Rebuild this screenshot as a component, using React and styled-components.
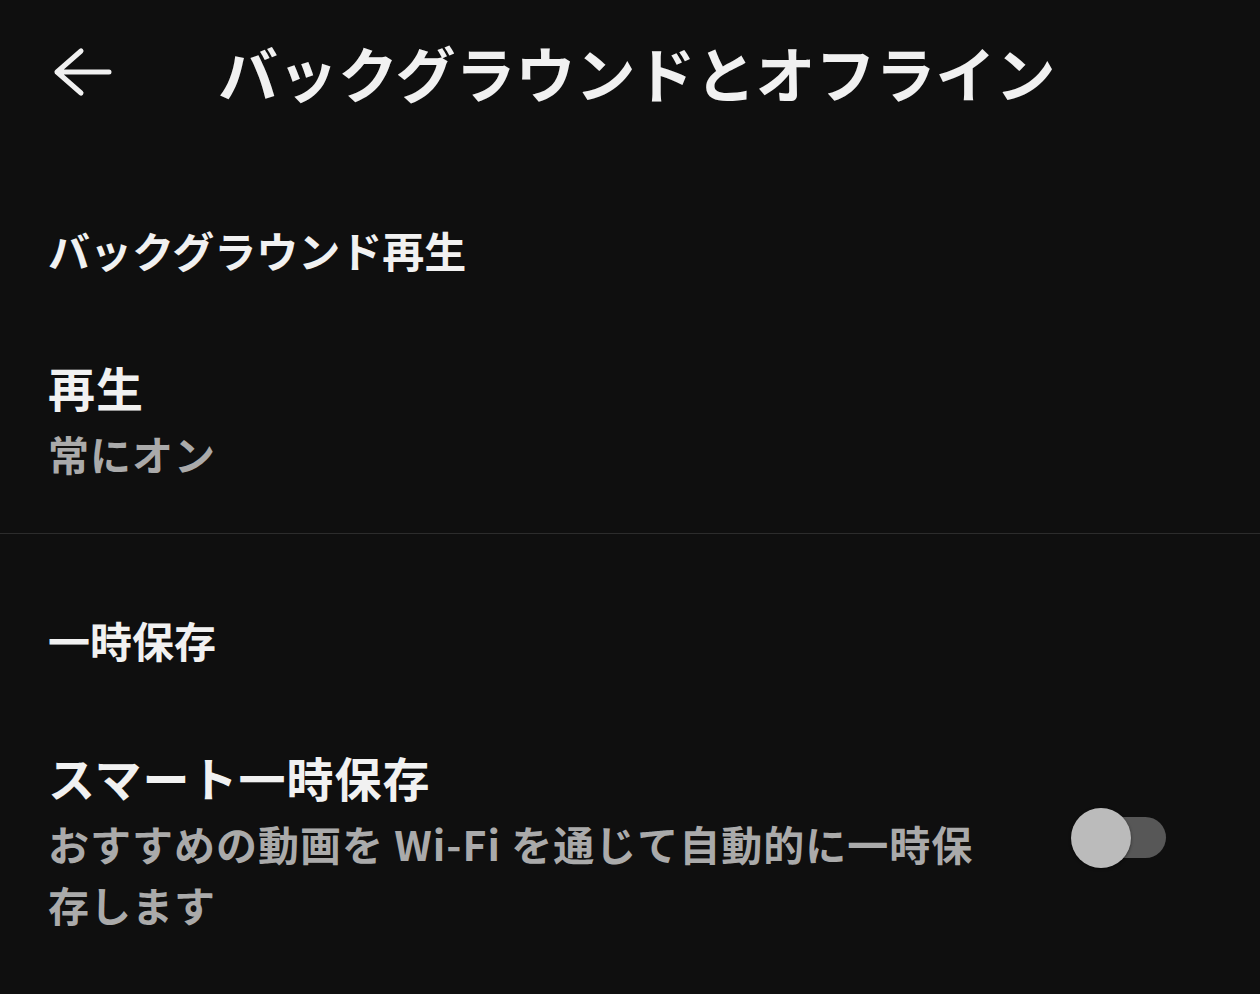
import styled, { createGlobalStyle } from "styled-components";

const GlobalStyle = createGlobalStyle`
  html, body {
    margin: 0;
    padding: 0;
    background: #0f0f0f;
  }
  body {
    font-family: "Noto Sans CJK JP", "Noto Sans", sans-serif;
    color: #f1f1f1;
  }
`;

const Page = styled.div`
  width: 1260px;
  min-height: 994px;
  background: #0f0f0f;
  overflow: hidden;
`;

const TopBar = styled.header`
  display: flex;
  align-items: center;
  height: 144px;
  padding-left: 48px;
  box-sizing: border-box;
`;

const BackButton = styled.button`
  display: flex;
  align-items: center;
  justify-content: center;
  width: 64px;
  height: 52px;
  padding: 0;
  border: none;
  background: none;
  color: #f1f1f1;
  cursor: pointer;
`;

const PageTitle = styled.h1`
  margin: 0 0 0 106px;
  font-size: 60px;
  font-weight: 700;
  line-height: 1;
  color: #f1f1f1;
`;

const SectionTitle = styled.h2`
  margin: 0;
  padding: 76px 48px 0;
  font-size: 42px;
  font-weight: 700;
  line-height: 60px;
  color: #f1f1f1;
`;

const Row = styled.div`
  display: flex;
  align-items: center;
  padding: 70px 94px ${({ $last }) => ($last ? "56px" : "49px")} 48px;
  border-bottom: ${({ $divider }) => ($divider ? "1px solid #2c2c2c" : "none")};
`;

const RowText = styled.div`
  flex: 1;
  min-width: 0;
`;

const RowTitle = styled.div`
  font-size: 47px;
  font-weight: 700;
  line-height: 73px;
  letter-spacing: 1px;
  color: #f1f1f1;
`;

const RowSub = styled.div`
  font-size: 41px;
  font-weight: 700;
  line-height: 61px;
  letter-spacing: 1px;
  color: #aaaaaa;
`;

const Switch = styled.div`
  position: relative;
  flex: none;
  width: 95px;
  height: 60px;
  margin-left: 85px;
  cursor: pointer;
`;

const Track = styled.span`
  position: absolute;
  right: 0;
  top: 9.5px;
  width: 70px;
  height: 41px;
  border-radius: 21px;
  background: ${({ $on }) => ($on ? "#3ea6ff" : "#575757")};
`;

const Knob = styled.span`
  position: absolute;
  top: 0;
  left: ${({ $on }) => ($on ? "35px" : "0")};
  width: 60px;
  height: 60px;
  border-radius: 50%;
  background: ${({ $on }) => ($on ? "#f1f1f1" : "#bbbbbb")};
  box-shadow: 0 1px 3px rgba(0, 0, 0, 0.5);
`;

function ArrowBack() {
  return (
    <svg width="64" height="52" viewBox="0 0 64 52" fill="none">
      <path
        d="M33 5 L9 26 L33 47 M9 26 H61"
        stroke="currentColor"
        strokeWidth="5"
        strokeLinecap="round"
        strokeLinejoin="round"
      />
    </svg>
  );
}

function Toggle({ on }) {
  return (
    <Switch role="switch" aria-checked={on}>
      <Track $on={on} />
      <Knob $on={on} />
    </Switch>
  );
}

export default function App() {
  return (
    <Page>
      <GlobalStyle />
      <TopBar>
        <BackButton aria-label="戻る">
          <ArrowBack />
        </BackButton>
        <PageTitle>バックグラウンドとオフライン</PageTitle>
      </TopBar>

      <SectionTitle>バックグラウンド再生</SectionTitle>
      <Row $divider>
        <RowText>
          <RowTitle>再生</RowTitle>
          <RowSub>常にオン</RowSub>
        </RowText>
      </Row>

      <SectionTitle>一時保存</SectionTitle>
      <Row $last>
        <RowText>
          <RowTitle>スマート一時保存</RowTitle>
          <RowSub>おすすめの動画を Wi-Fi を通じて自動的に一時保存します</RowSub>
        </RowText>
        <Toggle on={false} />
      </Row>
    </Page>
  );
}
